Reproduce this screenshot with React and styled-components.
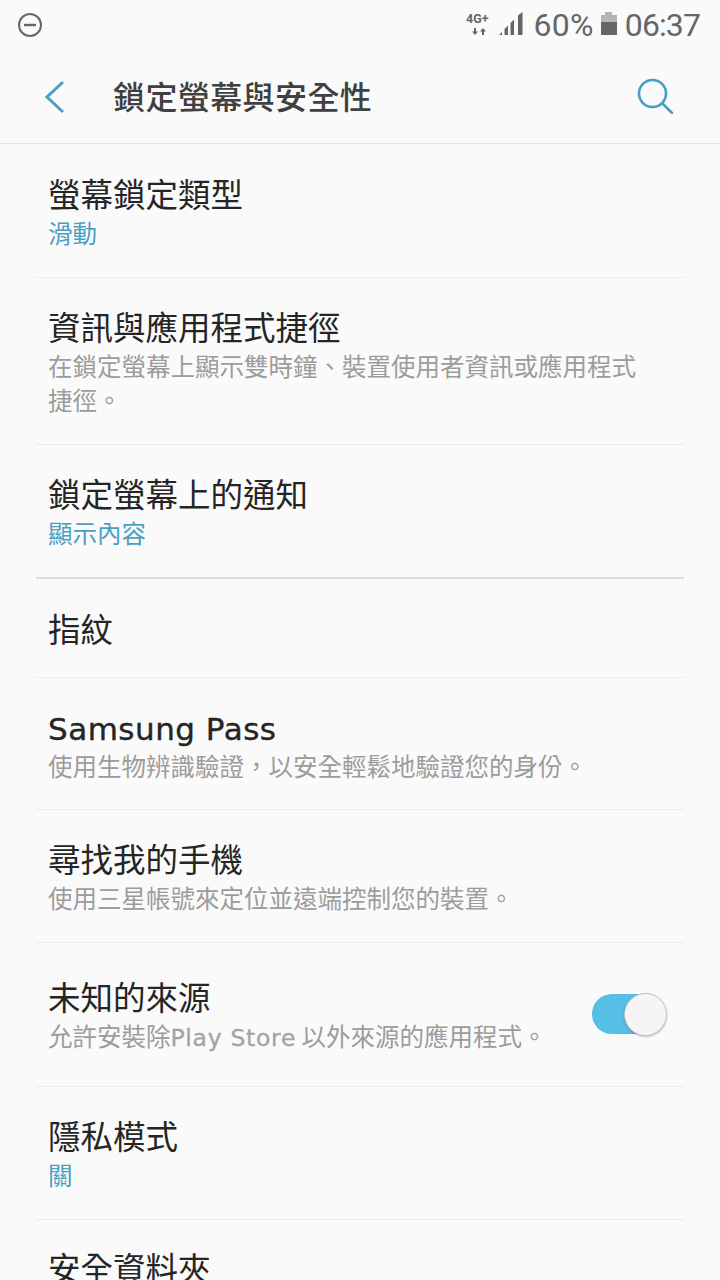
import React from "react";
import styled, { createGlobalStyle } from "styled-components";

const Global = createGlobalStyle`
  html, body { margin: 0; padding: 0; background: #fafafa; }
  body { font-family: "Noto Sans CJK TC", "Roboto", sans-serif; overflow: hidden; }
`;
const Page = styled.div`width: 720px; height: 1280px; overflow: hidden; background: #fafafa; display: flex; flex-direction: column;`;
const StatusBar = styled.div`height: 50px; display: flex; align-items: center; padding: 0 20px 0 17px; color: #666; flex: none;`;
const StatusRight = styled.div`margin-left: auto; display: flex; align-items: center;`;
const StatusText = styled.span`font-family: "Roboto", sans-serif; font-size: 32px; line-height: 50px; color: #666; letter-spacing: ${p => p.$ls}px; margin-left: ${p => p.$ml || 0}px;`;
const NetworkIcon = styled.svg`flex: none;`;
const SignalIcon = styled.svg`flex: none; margin-left: 5px;`;
const BatteryIcon = styled.svg`flex: none; margin-left: 6px;`;
const Header = styled.header`height: 93px; flex: none; display: flex; align-items: center; padding: 0 47px 0 44px; border-bottom: 1px solid #e6e6e6; box-sizing: content-box;`;
const HeaderTitle = styled.h1`margin: -4px 0 0 47px; font-size: 32px; letter-spacing: .4px; font-weight: 500; color: #404040; line-height: 1; flex: 1;`;
const SearchIcon = styled.svg`margin-top: -2px; flex: none;`;
const List = styled.div`padding: 0 36px;`;
const Row = styled.div`height: ${p => p.$h}px; box-sizing: border-box; border-bottom: ${p => p.$strong ? "2px solid #dcdcdc" : "1px solid #ececec"}; padding: 0 12px; display: flex; align-items: ${p => p.$top ? "flex-start" : "center"};`;
const RowText = styled.div`flex: 1; min-width: 0; display: flex; flex-direction: column; margin-top: ${p => p.$mt || 0}px;`;
const Title = styled.div`font-size: 32.5px; line-height: 44px; color: #252525; font-weight: 400;`;
const Brand = styled.span`font-family: "DejaVu Sans", sans-serif; letter-spacing: .5px; font-size: 31px; display: inline-block; -webkit-text-stroke: .4px #252525;`;
const Sub = styled.div`font-size: 24.5px; line-height: 34px; max-width: 600px; color: ${p => p.$accent ? "#4a9fc2" : "#9c9c9c"}; margin-top: ${p => p.$mt ?? 1}px;`;
const SubBrand = styled.span`font-family: "DejaVu Sans", sans-serif; font-size: 23.5px; letter-spacing: .7px; color: #a3a3a3; -webkit-text-stroke: .3px #a3a3a3;`;
const Toggle = styled.div`width: 68px; height: 40px; position: relative; flex: none; margin-right: 12px; margin-top: -2px; border-radius: 20px; background: #56bfe6;
  &::after { content: ""; position: absolute; right: -7px; top: -1px; width: 41px; height: 41px; border-radius: 50%; background: #f5f5f5; border: 1px solid #c4c4c4; box-shadow: 0 1px 2px rgba(0,0,0,.25); }`;

const rows = [
  { h: 134, t: "螢幕鎖定類型", s: "滑動", a: true },
  { h: 167, t: "資訊與應用程式捷徑", s: "在鎖定螢幕上顯示雙時鐘、裝置使用者資訊或應用程式捷徑。" },
  { h: 134, t: "鎖定螢幕上的通知", s: "顯示內容", a: true, strong: true },
  { h: 99, t: "指紋" },
  { h: 132, brand: true, s: "使用生物辨識驗證，以安全輕鬆地驗證您的身份。", sm: -2 },
  { h: 133, t: "尋找我的手機", s: "使用三星帳號來定位並遠端控制您的裝置。" },
  { h: 144, t: "未知的來源", toggle: true },
  { h: 133, t: "隱私模式", s: "關", a: true },
  { h: 100, t: "安全資料夾", last: true },
];

export default function App() {
  return (
    <Page>
      <Global />
      <StatusBar>
        <svg width="26" height="26" viewBox="0 0 26 26"><circle cx="13" cy="13" r="11" fill="none" stroke="#666" strokeWidth="2" /><path d="M7 13h12" stroke="#666" strokeWidth="2.4" /></svg>
        <StatusRight>
          <NetworkIcon width="27" height="26" viewBox="0 0 27 26" fill="#666">
            <text x="0" y="11" fontFamily="Roboto, sans-serif" fontWeight="700" fontSize="12.5">4G+</text>
            <path d="M8 16h2v3.500h2L9 23l-3-3.500h2zM16 23h2v-3.500h2L17 16l-3 3.500h2z" />
          </NetworkIcon>
          <SignalIcon width="26" height="26" viewBox="0 0 26 26" fill="#666">
            <path d="M1 23l3-3v3zM6.500 23v-6l3.500-3.500V23zM12.500 23V11l3.500-3.500V23zM20 23V3.500L24.500 0v23z" />
          </SignalIcon>
          <StatusText $ml={9} $ls={0.3}>60%</StatusText>
          <BatteryIcon width="18" height="26" viewBox="0 0 18 26">
            <path d="M5 0h7v3h5v8H1V3h4z" fill="#b5b5b5" />
            <path d="M1 10h16v13H1z" fill="#666" />
          </BatteryIcon>
          <StatusText $ml={7} $ls={-0.9}>06:37</StatusText>
        </StatusRight>
      </StatusBar>
      <Header>
        <svg width="22" height="34" viewBox="0 0 22 34" fill="none" stroke="#4a9fc2" strokeWidth="3"><path d="M19 2L3 17l16 15" /></svg>
        <HeaderTitle>鎖定螢幕與安全性</HeaderTitle>
        <SearchIcon width="36" height="36" viewBox="0 0 36 36" fill="none" stroke="#4a9fc2" strokeWidth="2.6" strokeLinecap="round"><circle cx="15.500" cy="15.500" r="13.500" /><path d="M25.500 25.500L35 35" /></SearchIcon>
      </Header>
      <List>
        {rows.map((r, i) => (
          <Row key={i} $h={r.h} $strong={r.strong} $top={r.last}>
            <RowText $mt={r.last ? 25 : -1}>
              <Title>{r.brand ? <Brand>Samsung Pass</Brand> : r.t}</Title>
              {r.s && <Sub $accent={r.a} $mt={r.sm}>{r.s}</Sub>}
              {r.toggle && <Sub>允許安裝除<SubBrand>Play Store</SubBrand> 以外來源的應用程式。</Sub>}
            </RowText>
            {r.toggle && <Toggle />}
          </Row>
        ))}
      </List>
    </Page>
  );
}
